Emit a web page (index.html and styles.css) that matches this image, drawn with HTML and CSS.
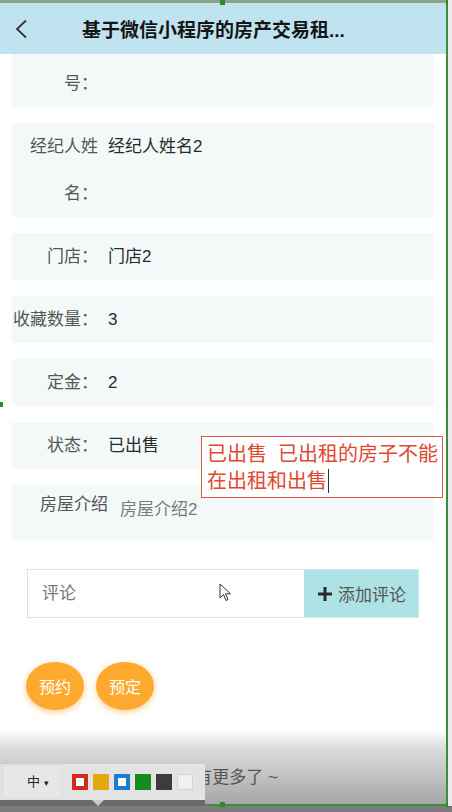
FILE: index.html
```html
<!DOCTYPE html>
<html lang="zh-CN">
<head>
    <meta charset="UTF-8">
    <meta name="viewport" content="width=device-width, initial-scale=1.0">
    <title>房产详情</title>
    <link rel="stylesheet" href="styles.css">
</head>
<body>
    <div class="frame">
        <div class="nav">
            <svg class="back" width="14" height="20" viewBox="0 0 14 20">
                <path d="M12 1.5 L3 10 L12 18.5" fill="none" stroke="#333" stroke-width="1.8"/>
            </svg>
            <div class="title">基于微信小程序的房产交易租...</div>
        </div>

        <div class="list">
            <div class="row first"><span class="label">号：</span><span class="value"></span></div>
            <div class="row"><span class="label">经纪人姓名：</span><span class="value">经纪人姓名2</span></div>
            <div class="row"><span class="label">门店：</span><span class="value">门店2</span></div>
            <div class="row"><span class="label">收藏数量：</span><span class="value">3</span></div>
            <div class="row"><span class="label">定金：</span><span class="value">2</span></div>
            <div class="row"><span class="label">状态：</span><span class="value">已出售</span></div>
            <div class="row intro"><span class="intro-label">房屋介绍</span><span class="intro-value">房屋介绍2</span></div>
        </div>

        <div class="comment">
            <div class="comment-input">评论</div>
            <div class="comment-add">
                <svg width="14" height="14" viewBox="0 0 14 14">
                    <path d="M7 0 V14 M0 7 H14" stroke="#2b2b2b" stroke-width="3"/>
                </svg>
                <span>添加评论</span>
            </div>
        </div>

        <div class="actions">
            <button class="round">预约</button>
            <button class="round">预定</button>
        </div>

        <div class="footer">没有更多了 ~</div>
    </div>

    <!-- annotation drawn over the page -->
    <div class="note">已出售&nbsp;&nbsp;已出租的房子不能<br>在出租和出售<span class="caret"></span></div>

    <svg class="pointer" width="13" height="19" viewBox="0 0 13 19">
        <path d="M1 1 L1 15 L4.5 11.5 L7 17.5 L9 16.6 L6.6 10.8 L11.5 10.8 Z" fill="#fff" stroke="#333" stroke-width="1"/>
    </svg>

    <div class="toolbar">
        <div class="size">中 <span class="arrow">▾</span></div>
        <div class="swatches">
            <span class="sw sw-red"></span>
            <span class="sw sw-gold"></span>
            <span class="sw sw-blue"></span>
            <span class="sw sw-green"></span>
            <span class="sw sw-dark"></span>
            <span class="sw sw-white"></span>
        </div>
        <div class="toolbar-bar"></div>
    </div>

    <span class="handle h1"></span>
    <span class="handle h2"></span>
    <span class="handle h3"></span>
    <span class="handle h4"></span>
    <span class="handle h5"></span>
    <span class="handle h6"></span>
</body>
</html>
```

FILE: styles.css
```css
body {
    margin: 0;
    width: 452px;
    height: 812px;
    overflow: hidden;
    position: relative;
    background: #7c7c7c;
    font-family: "Liberation Sans", "Noto Sans CJK SC", sans-serif;
}
.frame {
    width: 448px;
    height: 806px;
    box-sizing: border-box;
    border-top: 3px solid #8aa48a;
    border-right: 2px solid #3f8c3f;
    border-bottom: 2px solid #3f8c3f;
    background: #fff;
    display: flex;
    flex-direction: column;
    overflow: hidden;
}
body::after {
    content: "";
    position: absolute;
    left: 448px;
    top: 0;
    width: 4px;
    height: 806px;
    background: #ececec;
}
.nav {
    height: 51px;
    flex: none;
    background: #bfe3ef;
    display: flex;
    align-items: center;
    padding-left: 14px;
}
.back {
    flex: none;
}
.title {
    margin-left: 54px;
    white-space: nowrap;
    font-size: 19px;
    font-weight: bold;
    color: #151515;
}
.list {
    padding: 0 12px;
}
.row {
    display: flex;
    background: #f3f9f9;
    border-radius: 3px;
    margin-bottom: 16px;
    font-size: 17px;
    line-height: 47px;
}
.row.first {
    padding-top: 6px;
    border-radius: 0 0 3px 3px;
}
.label {
    width: 86px;
    flex: none;
    text-align: right;
    color: #555;
}
.value {
    margin-left: 10px;
    color: #2a2a2a;
}
.row.intro {
    height: 55px;
    box-sizing: border-box;
    padding: 8px 0 0 28px;
    line-height: 24px;
    align-items: flex-start;
}
.intro-label {
    color: #555;
}
.intro-value {
    margin-left: 12px;
    margin-top: 5px;
    color: #7a7a7a;
}
.comment {
    margin: 13px 27px 0;
    height: 49px;
    box-sizing: border-box;
    border: 1px solid #cde8ec;
    display: flex;
    font-size: 17px;
}
.comment-input {
    flex: 1;
    padding-left: 14px;
    line-height: 47px;
    color: #777;
}
.comment-add {
    width: 114px;
    box-sizing: border-box;
    background: #ade3e4;
    display: flex;
    align-items: center;
    padding-left: 14px;
    gap: 6px;
    color: #555;
}
.actions {
    display: flex;
    gap: 12px;
    padding-left: 26px;
    margin-top: 44px;
}
.round {
    width: 58px;
    height: 48px;
    border: none;
    border-radius: 50%;
    background: #ffaa2e;
    color: #fff;
    font-family: inherit;
    font-size: 16px;
    padding: 0;
    box-shadow: 0 2px 6px rgba(255, 160, 40, 0.55);
}
.footer {
    margin-top: auto;
    height: 78px;
    flex: none;
    background: linear-gradient(#fff 0, #fff 6%, #dcdcdc 28%, #bdbdbd 70%, #a6a6a6 100%);
    text-align: center;
    font-size: 17px;
    color: #555;
    line-height: 24px;
    padding-top: 40px;
    box-sizing: border-box;
    padding-left: 10px;
}

/* annotation */
.note {
    position: absolute;
    left: 201px;
    top: 436px;
    width: 242px;
    height: 62px;
    box-sizing: border-box;
    border: 1px solid #d9574a;
    background: rgba(255, 255, 255, 0.92);
    padding: 4px 0 0 5px;
    font-size: 20px;
    line-height: 27px;
    color: #e1482f;
    white-space: nowrap;
}
.caret {
    display: inline-block;
    width: 0;
    height: 24px;
    border-left: 1.5px solid #333;
    vertical-align: -5px;
    margin-left: 1px;
}
.pointer {
    position: absolute;
    left: 219px;
    top: 583px;
}

/* screenshot tool bar */
.toolbar {
    position: absolute;
    left: 0;
    top: 764px;
    width: 205px;
    height: 42px;
}
.toolbar::before {
    content: "";
    position: absolute;
    left: 0;
    top: 0;
    width: 60px;
    height: 36px;
    background: #e0e0e0;
}
.size {
    position: absolute;
    left: 4px;
    top: 2px;
    width: 56px;
    height: 32px;
    box-sizing: border-box;
    padding-left: 23px;
    background: #e7e7e7;
    font-size: 13px;
    line-height: 32px;
    color: #222;
}
.arrow {
    font-size: 9px;
}
.swatches {
    position: absolute;
    left: 60px;
    top: 0;
    width: 145px;
    height: 36px;
    background: #e3e3e3;
    display: flex;
    align-items: center;
    gap: 5px;
    padding-left: 12px;
    box-sizing: border-box;
}
.sw {
    width: 16px;
    height: 16px;
    box-sizing: border-box;
    flex: none;
}
.sw-red {
    border: 4px solid #d12b1f;
    background: #fff;
}
.sw-gold {
    background: #e2a80c;
}
.sw-blue {
    border: 4px solid #1c7cd3;
    background: #fff;
}
.sw-green {
    background: #168a1f;
}
.sw-dark {
    background: #3c3c3c;
}
.sw-white {
    background: #f0f0f0;
    border: 1px solid #d4d4d4;
}
.toolbar-bar {
    position: absolute;
    left: 0;
    top: 36px;
    width: 205px;
    height: 6px;
    background: #6a6a6a;
}
.toolbar-bar::after {
    content: "";
    position: absolute;
    left: 92px;
    top: 0;
    border-left: 6px solid transparent;
    border-right: 6px solid transparent;
    border-top: 6px solid #c9c9c9;
}
.handle {
    position: absolute;
    width: 5px;
    height: 5px;
    background: #2f8a2f;
}
.h1 { left: 220px; top: 0; }
.h2 { left: 446px; top: 0; }
.h3 { left: 446px; top: 400px; }
.h4 { left: -2px; top: 402px; }
.h5 { left: 220px; top: 802px; }
.h6 { left: 446px; top: 802px; }
```
